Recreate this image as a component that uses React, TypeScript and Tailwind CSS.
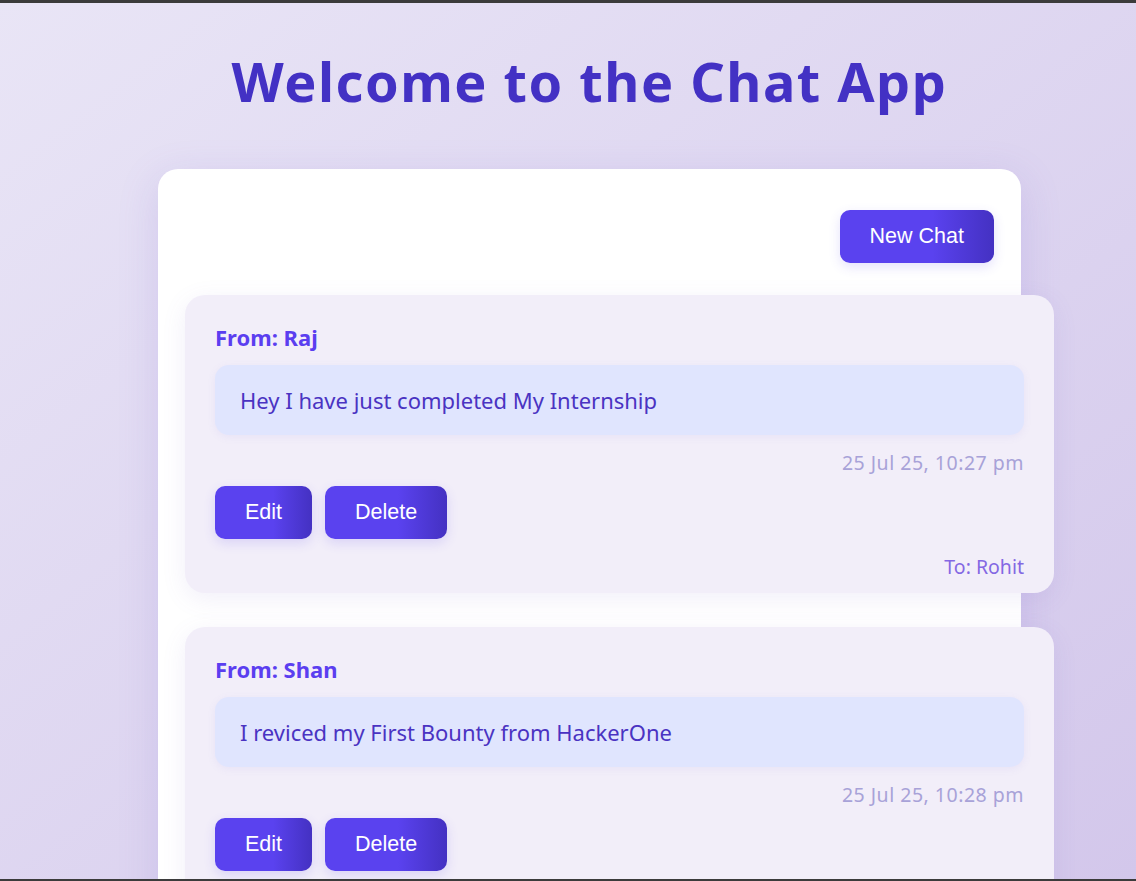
import React from "react";

type Msg = { from: string; text: string; time: string; to: string };

const messages: Msg[] = [
  { from: "Raj", text: "Hey I have just completed My Internship", time: "25 Jul 25, 10:27 pm", to: "Rohit" },
  { from: "Shan", text: "I reviced my First Bounty from HackerOne", time: "25 Jul 25, 10:28 pm", to: "Rohit" },
];

function Btn({ children }: { children: React.ReactNode }) {
  return (
    <button
      className="rounded-[10px] bg-gradient-to-r from-[#5a42ef] via-[#5a42ef] via-60% to-[#4431c2] px-[30px] py-[14px] text-[21.5px] leading-[25px] text-white shadow-[0_4px_12px_rgba(90,66,239,0.16)]"
      style={{ fontFamily: '"Liberation Sans", Arial, sans-serif' }}
    >
      {children}
    </button>
  );
}

function Card({ m }: { m: Msg }) {
  return (
    <div className="box-content w-full rounded-[20px] bg-[#f2eef9] px-[30px] pt-[27px] pb-[13px] shadow-[0_6px_24px_rgba(120,100,200,0.10)]">
      <div className="text-[22px] font-bold leading-[30px] text-[#5b3ef0]">From: {m.from}</div>
      <div className="mt-[13px] rounded-[14px] bg-[#e0e5fe] px-[25px] py-[20px] text-[22px] leading-[30px] text-[#4a33c2] shadow-[0_2px_8px_rgba(120,100,220,0.08)]">
        {m.text}
      </div>
      <div className="mt-[16px] text-right text-[19.5px] leading-[24px] tracking-[0.5px] text-[#a8a2d8]">{m.time}</div>
      <div className="mt-[11px] flex gap-[13px]">
        <Btn>Edit</Btn>
        <Btn>Delete</Btn>
      </div>
      <div className="mt-[15px] text-right text-[19.5px] leading-[26px] text-[#8468e3]">To: {m.to}</div>
    </div>
  );
}

export default function App() {
  return (
    <div
      className="relative h-[881px] overflow-hidden bg-gradient-to-br from-[#e9e5f6] to-[#d3c7eb]"
      style={{ fontFamily: '"Noto Sans", "Open Sans", sans-serif' }}
    >
      <div className="h-[3px] bg-[#3b3b3b]" />
      <div className="ml-[158px] w-[863px]">
        <h1 className="pt-[40px] text-center text-[54px] font-bold leading-[76px] tracking-[1.5px] text-[#4331c4]">
          Welcome to the Chat App
        </h1>
        <div className="mt-[50px] rounded-[20px] bg-white px-[27px] pt-[41px] pb-[40px] shadow-[0_10px_40px_rgba(120,100,210,0.18)]">
          <div className="flex justify-end">
            <Btn>New Chat</Btn>
          </div>
          <div className="mt-[32px] flex flex-col gap-[34px]">
            {messages.map((m, i) => (
              <Card key={i} m={m} />
            ))}
          </div>
        </div>
      </div>
      <div className="absolute bottom-0 left-0 h-[2px] w-full bg-[#3b3b3b]" />
    </div>
  );
}
